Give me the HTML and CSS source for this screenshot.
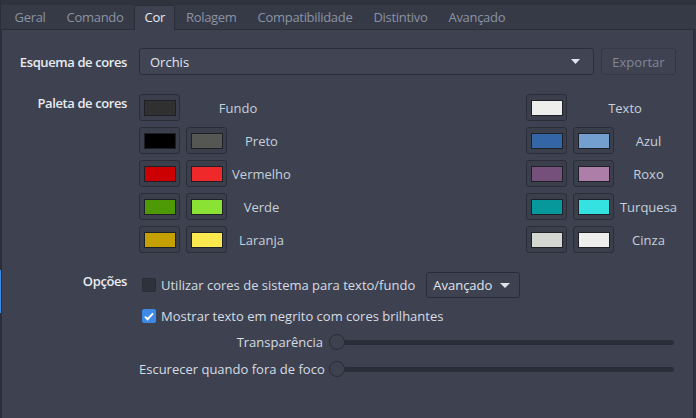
FILE: index.html
```html
<!DOCTYPE html>
<html lang="pt">
<head>
<meta charset="utf-8">
<link rel="stylesheet" href="styles.css">
</head>
<body>
<div class="shell">
  <div class="edge"><div class="edge-mark"></div></div>
  <div class="main">
    <div class="tabbar">
      <div class="tab">Geral</div>
      <div class="tab">Comando</div>
      <div class="tab active">Cor</div>
      <div class="tab">Rolagem</div>
      <div class="tab">Compatibilidade</div>
      <div class="tab">Distintivo</div>
      <div class="tab">Avançado</div>
    </div>
    <div class="panel">
      <div class="form">
        <div class="label center">Esquema de cores</div>
        <div class="scheme-row">
          <div class="combo"><span>Orchis</span><svg class="caret" width="9" height="5" viewBox="0 0 9 5"><path d="M0 0h9L4.5 5z" fill="#e2e6ec"/></svg></div>
          <div class="btn disabled">Exportar</div>
        </div>

        <div class="label">Paleta de cores</div>
        <div class="palette">
          <div class="swbtn"><div class="sw" style="background:#303030"></div></div>
          <div class="pname wide">Fundo</div>
          <div class="gap"></div>
          <div class="swbtn"><div class="sw" style="background:#eeeeec"></div></div>
          <div class="pname wide">Texto</div>

          <div class="swbtn"><div class="sw" style="background:#000000"></div></div>
          <div class="swbtn"><div class="sw" style="background:#555753"></div></div>
          <div class="pname">Preto</div>
          <div class="gap"></div>
          <div class="swbtn"><div class="sw" style="background:#3465a4"></div></div>
          <div class="swbtn"><div class="sw" style="background:#729fcf"></div></div>
          <div class="pname">Azul</div>

          <div class="swbtn"><div class="sw" style="background:#cc0000"></div></div>
          <div class="swbtn"><div class="sw" style="background:#ef2929"></div></div>
          <div class="pname">Vermelho</div>
          <div class="gap"></div>
          <div class="swbtn"><div class="sw" style="background:#75507b"></div></div>
          <div class="swbtn"><div class="sw" style="background:#ad7fa8"></div></div>
          <div class="pname">Roxo</div>

          <div class="swbtn"><div class="sw" style="background:#4e9a06"></div></div>
          <div class="swbtn"><div class="sw" style="background:#8ae234"></div></div>
          <div class="pname">Verde</div>
          <div class="gap"></div>
          <div class="swbtn"><div class="sw" style="background:#06989a"></div></div>
          <div class="swbtn"><div class="sw" style="background:#34e2e2"></div></div>
          <div class="pname">Turquesa</div>

          <div class="swbtn"><div class="sw" style="background:#c4a000"></div></div>
          <div class="swbtn"><div class="sw" style="background:#fce94f"></div></div>
          <div class="pname">Laranja</div>
          <div class="gap"></div>
          <div class="swbtn"><div class="sw" style="background:#d3d7cf"></div></div>
          <div class="swbtn"><div class="sw" style="background:#eeeeec"></div></div>
          <div class="pname">Cinza</div>
        </div>

        <div class="label">Opções</div>
        <div class="options">
          <div class="opt-row first">
            <span class="check"></span>
            <span class="opt-text">Utilizar cores de sistema para texto/fundo</span>
            <div class="btn menu">Avançado<svg class="caret" width="10" height="5" viewBox="0 0 10 5"><path d="M0 0h10L5 5z" fill="#dfe3ea"/></svg></div>
          </div>
          <div class="opt-row second">
            <span class="check on"><svg width="10" height="9" viewBox="0 0 10 9"><path d="M1 4.6l2.6 2.6L9 1.4" fill="none" stroke="#ffffff" stroke-width="2"/></svg></span>
            <span class="opt-text">Mostrar texto em negrito com cores brilhantes</span>
          </div>
          <div class="slider-row">
            <span class="slabel">Transparência</span>
            <div class="slider"><span class="handle"></span><span class="track"></span></div>
          </div>
          <div class="slider-row">
            <span class="slabel">Escurecer quando fora de foco</span>
            <div class="slider"><span class="handle"></span><span class="track"></span></div>
          </div>
        </div>
      </div>
    </div>
  </div>
</div>
</body>
</html>
```
FILE: styles.css
```css
* { box-sizing: border-box; }
html, body { margin: 0; padding: 0; }
body {
  width: 696px;
  height: 418px;
  overflow: hidden;
  background: #30333e;
  font-family: "Open Sans", "Noto Sans", sans-serif;
  font-size: 13px;
  color: #d6dce4;
}
.shell { display: flex; height: 418px; }
.edge { width: 1px; background: #2c2f39; }
.edge-mark { margin-top: 270px; height: 43px; background: #3d8ae6; }
.main { flex: 1; display: flex; flex-direction: column; background: #30333e; }
.tabbar {
  display: flex;
  height: 29px;
  padding: 5px 0 0 3px;
  background: linear-gradient(#30333e 0, #30333e 5px, #363a47 5px);
}
.tab {
  height: 24px;
  line-height: 22px;
  padding: 0 9.5px;
  border: 1px solid transparent;
  border-bottom: none;
  color: #8a93a3;
  letter-spacing: -0.3px;
  white-space: nowrap;
}
.tab.active {
  background: #3e4250;
  border-color: #2b2e38;
  border-radius: 2px 2px 0 0;
  color: #e6eaf0;
  margin-bottom: -1px;
  height: 25px;
  position: relative;
  z-index: 1;
}
.panel {
  flex: 1;
  margin-right: 2px;
  background: #3e4250;
  border: 1px solid #2b2e38;
  border-bottom: none;
  padding-top: 18px;
}
.form {
  display: grid;
  grid-template-columns: 125px 538px;
  column-gap: 12px;
  row-gap: 19px;
  align-items: start;
}
.label {
  text-align: right;
  font-weight: 600;
  letter-spacing: -0.4px;
  color: #e8ebf0;
  line-height: 18px;
  white-space: nowrap;
}
.label.center { align-self: center; }
.scheme-row { display: flex; gap: 7px; height: 27px; }
.combo {
  width: 455px;
  height: 27px;
  display: flex;
  align-items: center;
  justify-content: space-between;
  padding: 0 13px 0 10px;
  background: #414553;
  border: 1px solid #2b2e38;
  border-radius: 3px;
  color: #e2e6ec;
}
.btn {
  height: 27px;
  display: flex;
  align-items: center;
  border: 1px solid #353844;
  border-radius: 3px;
  background: #3f4351;
}
.btn.disabled { width: 75px; justify-content: center; color: #7f8696; }
.palette {
  display: grid;
  grid-template-columns: 41px 41px 57px 1fr 41px 41px 57px;
  grid-auto-rows: 27px;
  column-gap: 6px;
  row-gap: 6px;
}
.swbtn {
  display: flex;
  align-items: center;
  justify-content: center;
  border: 1px solid #2b2e38;
  border-radius: 3px;
  background: #3b3f4c;
}
.sw { width: 32px; height: 16px; border: 1px solid #1e2027; }
.pname {
  display: flex;
  align-items: center;
  justify-content: center;
  color: #c6d0dc;
  white-space: nowrap;
}
.pname.wide { grid-column: span 2; }
.options { display: flex; flex-direction: column; }
.opt-row { display: flex; align-items: center; }
.opt-row.first { height: 26px; }
.opt-row.second { height: 18px; margin-top: 9px; }
.check {
  width: 14px;
  height: 14px;
  margin: 0 5px 0 3px;
  border-radius: 2px;
  background: #2f323c;
  border: 1px solid #2a2c35;
  display: flex;
  align-items: center;
  justify-content: center;
}
.check.on { background: #3d8ae6; border-color: #3d8ae6; }
.opt-text { color: #d6dce4; white-space: nowrap; }
.btn.menu {
  margin-left: 11px;
  width: 94px;
  height: 26px;
  padding: 0 9px 0 6px;
  justify-content: space-between;
  border-color: #2b2e38;
  background: #3e4250;
  color: #e0e5ec;
}
.slider-row {
  display: grid;
  grid-template-columns: 184px 345px;
  column-gap: 6px;
  align-items: center;
  height: 20px;
  margin-top: 7px;
}
.slabel { text-align: right; color: #d6dce4; white-space: nowrap; }
.slider { display: flex; align-items: center; height: 16px; }
.handle {
  width: 16px;
  height: 16px;
  border-radius: 50%;
  border: 1px solid #2a2c35;
  background: #3e4250;
  flex: none;
  position: relative;
  z-index: 1;
}
.track {
  flex: 1;
  height: 5px;
  margin-left: -2px;
  border-radius: 3px;
  background: #2b2e39;
}
```
